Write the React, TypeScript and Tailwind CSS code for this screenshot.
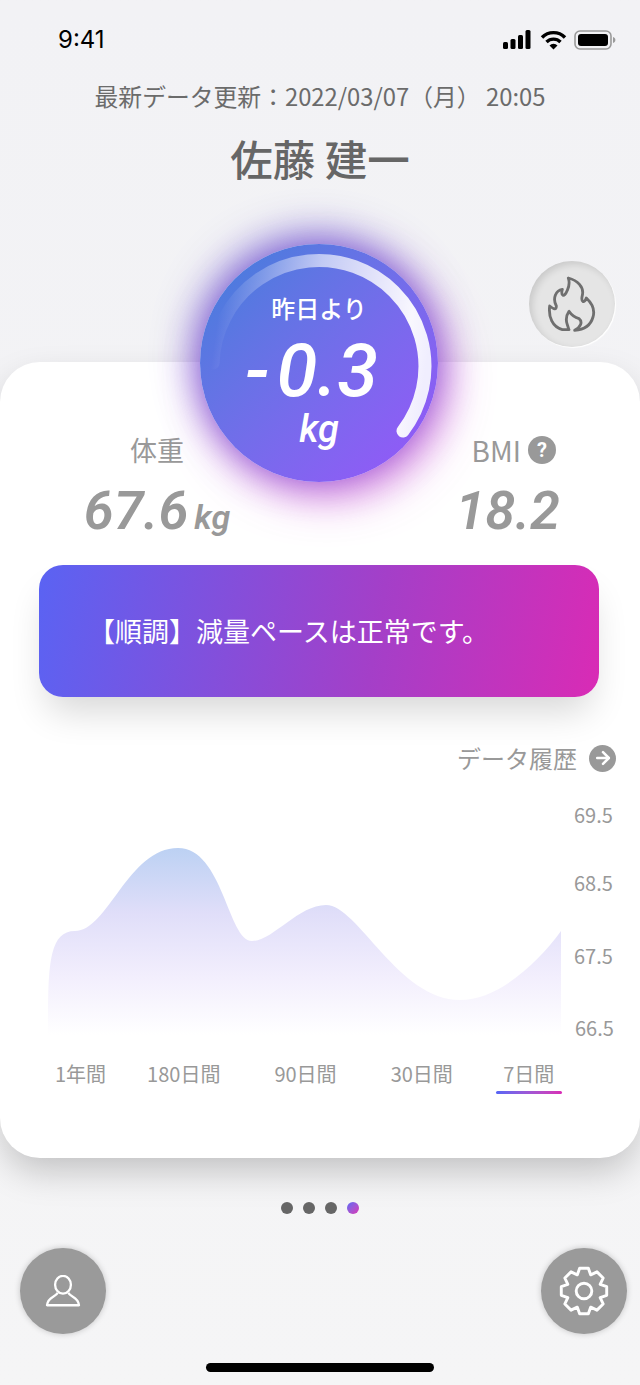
import { ArrowRight } from 'lucide-react'

const jp = 'font-["Noto_Sans_CJK_JP","Noto_Sans",sans-serif]'
const num = 'font-["Roboto",sans-serif] italic font-semibold'

// 8 tooth gear outline for the settings button
function gearPath() {
  const cx = 24
  const cy = 24
  const pts: string[] = []
  for (let i = 0; i < 8; i++) {
    const a = (i * Math.PI) / 4 - Math.PI / 2
    const spots: [number, number][] = [
      [-0.39, 16.8],
      [-0.19, 22.2],
      [0.19, 22.2],
      [0.39, 16.8],
    ]
    spots.forEach(([off, r]) => {
      pts.push(`${(cx + r * Math.cos(a + off)).toFixed(2)} ${(cy + r * Math.sin(a + off)).toFixed(2)}`)
    })
  }
  return 'M' + pts.join('L') + 'Z'
}

function StatusBar() {
  return (
    <div className="flex items-center justify-between h-[28px] pl-[58px] pr-[24px] mt-[26px]">
      <span className='font-["Inter",sans-serif] text-[24px] font-normal text-black leading-none'>9:41</span>
      <div className="flex items-center gap-[7px]">
        <svg width="30" height="22" viewBox="0 0 30 22" fill="#000">
          <rect x="0" y="13" width="5" height="7" rx="1.5" />
          <rect x="7.500" y="10" width="5" height="10" rx="1.5" />
          <rect x="15" y="6" width="5" height="14" rx="1.5" />
          <rect x="22.500" y="1" width="5" height="19" rx="1.5" />
        </svg>
        <svg width="27" height="22" viewBox="0 0 27 22" fill="none" stroke="#000" strokeWidth="3.4">
          <path d="M2 8.500a16 16 0 0 1 23 0" />
          <path d="M6.500 13a10 10 0 0 1 14 0" />
          <path d="M13.500 20.500l-4-4a5.600 5.600 0 0 1 8 0z" fill="#000" stroke="none" />
        </svg>
        <svg width="42" height="22" viewBox="0 0 42 22" fill="none">
          <rect x="1" y="2" width="36" height="18" rx="5" stroke="#9a9a9a" strokeWidth="1.6" />
          <rect x="4" y="5" width="30" height="12" rx="3" fill="#000" />
          <path d="M39 8v6c1.600-.5 2.400-1.600 2.400-3S40.600 8.500 39 8z" fill="#9a9a9a" />
        </svg>
      </div>
    </div>
  )
}

function Gauge() {
  return (
    <div className="absolute left-[200px] top-[244px] z-10 w-[238px] h-[238px] rounded-full bg-gradient-to-br from-[#3a7fda] to-[#9754fa] shadow-[-4px_-8px_40px_rgba(70,50,200,0.7),8px_14px_44px_rgba(205,70,210,0.7)] text-white">
      <svg className="absolute inset-0" width="238" height="238" viewBox="0 0 238 238" fill="none">
        <defs>
          <linearGradient id="arc" gradientUnits="userSpaceOnUse" x1="14" y1="100" x2="225" y2="130">
            <stop offset="0" stopColor="#fff" stopOpacity="0" />
            <stop offset="0.45" stopColor="#fff" stopOpacity="0.62" />
            <stop offset="0.9" stopColor="#fff" stopOpacity="0.95" />
            <stop offset="1" stopColor="#f0eefe" />
          </linearGradient>
        </defs>
        <path d="M13 119A106 106 0 1 1 203 187" stroke="url(#arc)" strokeWidth="13" strokeLinecap="round" />
      </svg>
      <div className="relative flex flex-col items-center pt-[48px]">
        <span className={`${jp} text-[24px] font-medium leading-[32px]`}>昨日より</span>
        <span className={`${num} !font-medium text-[74px] leading-[76px] -ml-[15px] mt-[9px]`}>
          <span className="mr-[7px]">-</span>0.3
        </span>
        <span className={`${num} !font-medium text-[38px] leading-[44px] -mt-[2px]`}>kg</span>
      </div>
    </div>
  )
}

function FlameButton() {
  return (
    <div className="absolute left-[529px] top-[261px] flex items-center justify-center w-[86px] h-[86px] rounded-full bg-[#e5e5e5] shadow-[inset_3px_3px_7px_rgba(0,0,0,0.12),1px_1px_1px_#fff]">
      <svg width="50" height="56" viewBox="115 82 148 168" fill="none" stroke="#6f6f6f" strokeWidth="8.500" strokeLinejoin="round" strokeLinecap="round">
        <path d="M178 88C205 95 226 115 220 140C215 160 226 166 232 148C250 165 258 185 252 205C245 230 225 243 197 245C215 235 222 220 210 210C195 206 188 200 180 188C172 200 170 215 175 228C178 236 178 240 180 243L160 243C130 235 118 205 122 172C135 182 142 185 142 172C130 150 140 125 160 122C155 140 165 150 175 125C182 110 182 100 178 88Z" />
      </svg>
    </div>
  )
}

function Chart() {
  return (
    <div className="flex mt-[27px] h-[272px]">
      <svg className="ml-[48px] mt-[47px]" width="514" height="188" viewBox="0 0 514 188">
        <defs>
          <linearGradient id="area" x1="0" y1="0" x2="0" y2="1">
            <stop offset="0" stopColor="#bcd1f3" />
            <stop offset="0.35" stopColor="#e0def9" />
            <stop offset="0.7" stopColor="#f3effd" />
            <stop offset="1" stopColor="#fff" />
          </linearGradient>
        </defs>
        <path
          d="M0 187C0 120 0 83 27 83C60 83 80 0 130 0C175 0 180 93 204 93C225 93 250 57 278 57C310 57 350 152 412 152C450 152 490 115 513 83L513 187Z"
          fill="url(#area)"
        />
      </svg>
      <div className={`${jp} ml-[12px] flex flex-col text-[20px] leading-[28px] text-[#999]`}>
        <span>69.5</span>
        <span className="mt-[40px]">68.5</span>
        <span className="mt-[45px]">67.5</span>
        <span className="mt-[44px] ml-[1px]">66.5</span>
      </div>
    </div>
  )
}

function Tabs() {
  return (
    <div className={`${jp} flex mt-[-13px] text-[20px] leading-[28px] text-[#999]`}>
      <span className="ml-[55px]">1年間</span>
      <span className="ml-[41px]">180日間</span>
      <span className="ml-[54px]">90日間</span>
      <span className="ml-[54px]">30日間</span>
      <div className="ml-[43px] flex flex-col items-center w-[66px]">
        <span>7日間</span>
        <div className="w-full h-[3px] mt-[3px] rounded-full bg-gradient-to-r from-[#5565f5] to-[#d92bb5]" />
      </div>
    </div>
  )
}

export default function App() {
  return (
    <div className={`${jp} relative flex flex-col w-[640px] h-[1385px] overflow-hidden bg-gradient-to-b from-[#f2f2f5] to-[#f5f5f6]`}>
      <StatusBar />
      <p className="mt-[26px] text-center text-[23.8px] leading-[32px] text-[#6b6b6b]">最新データ更新：2022/03/07（月） 20:05</p>
      <h1 className="mt-[18px] text-center text-[42.5px] font-medium leading-[56px] text-[#666]">佐藤 建一</h1>

      <FlameButton />
      <Gauge />

      <div className="mt-[176px] h-[796px] shrink-0 rounded-[40px] bg-white shadow-[0_16px_36px_-4px_rgba(0,0,0,0.22)]">
        <div className="flex justify-between pt-[69px] pl-[82px] pr-[80px]">
          <div className="flex flex-col items-center w-[150px]">
            <span className="text-[27px] leading-[38px] text-[#999]">体重</span>
            <span className={`${num} mt-[12px] text-[54px] leading-[60px] text-[#999]`}>
              67.6<span className="ml-[6px] text-[34px]">kg</span>
            </span>
          </div>
          <div className="flex flex-col items-center">
            <div className="flex items-center gap-[7px] h-[38px] ml-[12px]">
              <span className="text-[28px] text-[#999]">BMI</span>
              <span className='flex items-center justify-center w-[28px] h-[28px] rounded-full bg-[#999] font-["Roboto",sans-serif] text-[20px] font-bold text-white'>?</span>
            </div>
            <span className={`${num} mt-[12px] text-[54px] leading-[60px] text-[#999]`}>18.2</span>
          </div>
        </div>

        <div className="flex items-center ml-[39px] mr-[41px] mt-[18px] h-[132px] pl-[49px] rounded-[24px] bg-[linear-gradient(100deg,#5a63f3_0%,#a43fc8_60%,#d92bb5_100%)] shadow-[0_22px_36px_-8px_rgba(0,0,0,0.16)]">
          <span className="text-[27px] text-white">【順調】減量ペースは正常です。</span>
        </div>

        <div className="flex items-center justify-end gap-[12px] mt-[45px] pr-[24px] h-[32px]">
          <span className="text-[24px] text-[#999]">データ履歴</span>
          <span className="flex items-center justify-center w-[27px] h-[27px] rounded-full bg-[#999]">
            <ArrowRight size={20} color="#fff" strokeWidth={3} />
          </span>
        </div>

        <Chart />
        <Tabs />
      </div>

      <div className="flex justify-center gap-[10px] mt-[44px]">
        <span className="w-[12px] h-[12px] rounded-full bg-[#666]" />
        <span className="w-[12px] h-[12px] rounded-full bg-[#666]" />
        <span className="w-[12px] h-[12px] rounded-full bg-[#666]" />
        <span className="w-[12px] h-[12px] rounded-full bg-gradient-to-br from-[#5565f5] to-[#d92bb5]" />
      </div>

      <div className="flex justify-between mt-[34px] pl-[20px] pr-[13px]">
        <div className="flex items-center justify-center w-[86px] h-[86px] rounded-full bg-[#9a9a9a] shadow-[0_0_6px_rgba(0,0,0,0.2)]">
          <svg width="36" height="32" viewBox="0 0 40 36" fill="none" stroke="#fff" strokeWidth="2.600">
            <ellipse cx="20" cy="11" rx="8.900" ry="10" />
            <path d="M14 20C12 25 3 24 2 34H38C37 24 28 25 26 20" strokeLinejoin="round" />
          </svg>
        </div>
        <div className="flex items-center justify-center w-[86px] h-[86px] rounded-full bg-[#9a9a9a] shadow-[0_0_6px_rgba(0,0,0,0.2)]">
          <svg width="50" height="50" viewBox="0 0 48 48" fill="none" stroke="#fff" strokeWidth="2.800" strokeLinejoin="round">
            <path d={gearPath()} />
            <circle cx="24" cy="24" r="7.500" />
          </svg>
        </div>
      </div>

      <div className="mx-auto mt-[29px] w-[228px] h-[9px] rounded-full bg-black" />
    </div>
  )
}
